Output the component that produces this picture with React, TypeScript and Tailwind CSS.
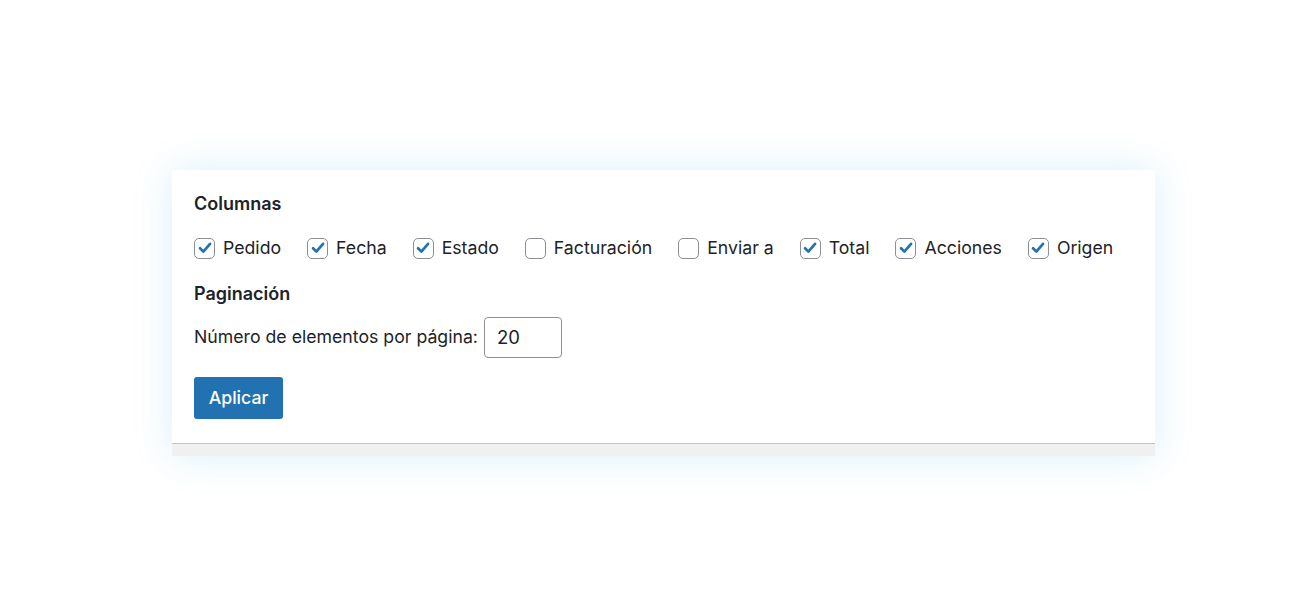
const columns = [
  { label: 'Pedido', checked: true },
  { label: 'Fecha', checked: true },
  { label: 'Estado', checked: true },
  { label: 'Facturación', checked: false },
  { label: 'Enviar a', checked: false },
  { label: 'Total', checked: true },
  { label: 'Acciones', checked: true },
  { label: 'Origen', checked: true },
];

function Checkbox({ checked }: { checked: boolean }) {
  return (
    <span className="flex h-[21px] w-[21px] shrink-0 items-center justify-center rounded-[5px] border border-[#8c8f94] bg-white">
      {checked && (
        <svg viewBox="0 0 20 20" className="h-[18px] w-[18px]">
          <path
            d="M4.5 10.3 L8.2 14 L15.6 5.4"
            fill="none"
            stroke="#2271b1"
            strokeWidth="3"
            strokeLinecap="round"
            strokeLinejoin="round"
          />
        </svg>
      )}
    </span>
  );
}

export default function App() {
  return (
    <div
      className="h-[607px] w-[1300px] bg-white pt-[170px] pl-[172px] text-[#1d2327]"
      style={{ fontFamily: 'Inter, "Open Sans", sans-serif' }}
    >
      <div className="w-[983px] shadow-[0_0_36px_rgba(60,170,215,0.18)]">
        <div className="border-b border-[#c3c4c7] bg-white px-[22px] pt-[23px] pb-[24px]">
          <h3 className="text-[18px] font-semibold leading-[22px]">Columnas</h3>
          <div className="mt-[22px] flex items-center gap-[26px] whitespace-nowrap">
            {columns.map((c) => (
              <label key={c.label} className="flex shrink-0 items-center gap-[8px] text-[17.7px] leading-[22px]">
                <Checkbox checked={c.checked} />
                <span>{c.label}</span>
              </label>
            ))}
          </div>
          <h3 className="mt-[24px] text-[18px] font-semibold leading-[22px]">Paginación</h3>
          <div className="mt-[12px] flex items-center text-[17.7px]">
            <span>Número de elementos por página:</span>
            <div className="ml-[6px] flex h-[41px] w-[78px] items-center rounded-[4px] border border-[#8c8f94] bg-white px-[12px] text-[18.5px]">
              20
            </div>
          </div>
          <button className="mt-[19px] h-[42px] w-[89px] rounded-[3px] bg-[#2271b1] text-[17.7px] font-medium text-white">
            Aplicar
          </button>
        </div>
        <div className="h-[12px] bg-[#f0f0f1]" />
      </div>
    </div>
  );
}
